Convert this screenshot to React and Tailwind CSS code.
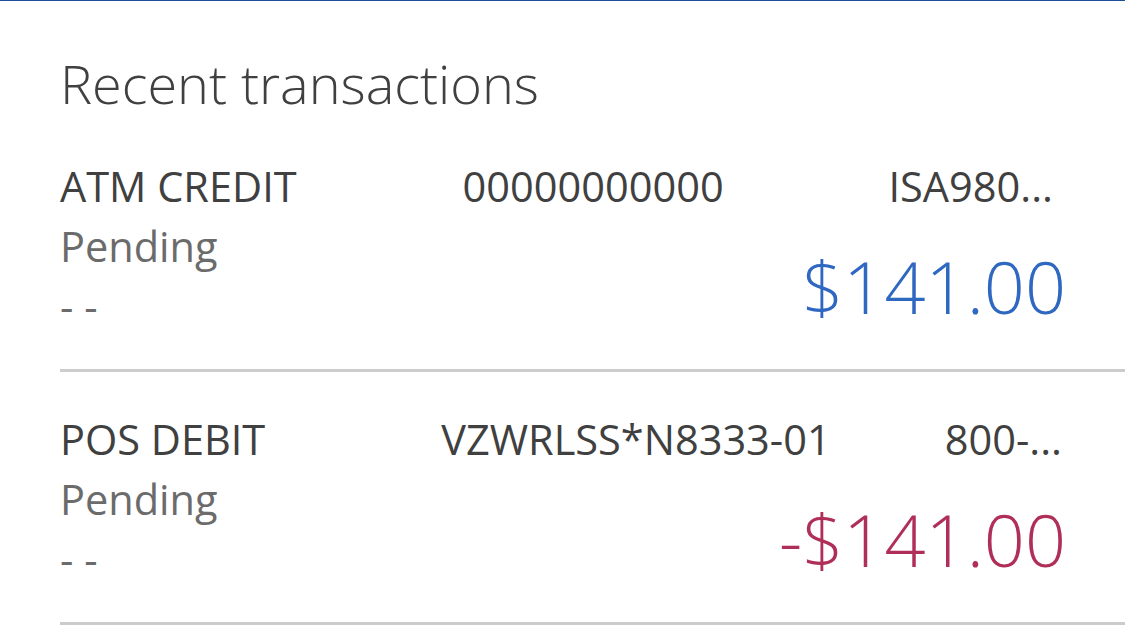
const transactions = [
  {
    type: "ATM CREDIT",
    ref: "00000000000",
    note: "ISA980...",
    status: "Pending",
    date: "- -",
    amount: "$141.00",
    credit: true,
    refGap: "ml-[166px]",
    notePad: "pr-[9px]",
  },
  {
    type: "POS DEBIT",
    ref: "VZWRLSS*N8333-01",
    note: "800-...",
    status: "Pending",
    date: "- -",
    amount: "-$141.00",
    credit: false,
    refGap: "ml-[176px]",
    notePad: "pr-0",
  },
];

function TransactionRow({ tx }) {
  return (
    <div className="border-b-[3px] border-[#cccccc] pb-[33px] pr-[63px] pt-[37px] first:pt-0">
      <div className="flex items-start text-[41.5px] leading-[60px] text-[#404040]">
        <span className="whitespace-nowrap">{tx.type}</span>
        <span className={`whitespace-nowrap ${tx.refGap}`}>{tx.ref}</span>
        <span className={`ml-auto whitespace-nowrap ${tx.notePad}`}>{tx.note}</span>
      </div>
      <div className="flex items-start justify-between">
        <div className="text-[41.5px] leading-[60px] text-[#6b6b6b]">
          <div>{tx.status}</div>
          <div>{tx.date}</div>
        </div>
        <div
          className={`-mr-[4px] mt-[34px] whitespace-nowrap text-[72px] font-light leading-[72px] ${
            tx.credit ? "text-[#2f68c0]" : "text-[#b02f58]"
          }`}
        >
          {tx.amount}
        </div>
      </div>
    </div>
  );
}

export default function App() {
  return (
    <div
      className="h-[637px] w-[1125px] overflow-hidden border-t border-[#1f4f99] bg-white"
      style={{ fontFamily: '"Open Sans", "Noto Sans", sans-serif' }}
    >
      <div className="pl-[60px] pt-[52px]">
        <h2 className="text-[54px] font-light leading-[60px] text-[#404040]">Recent transactions</h2>
        <div className="mt-[43px]">
          {transactions.map((tx) => (
            <TransactionRow key={tx.type} tx={tx} />
          ))}
        </div>
      </div>
    </div>
  );
}
